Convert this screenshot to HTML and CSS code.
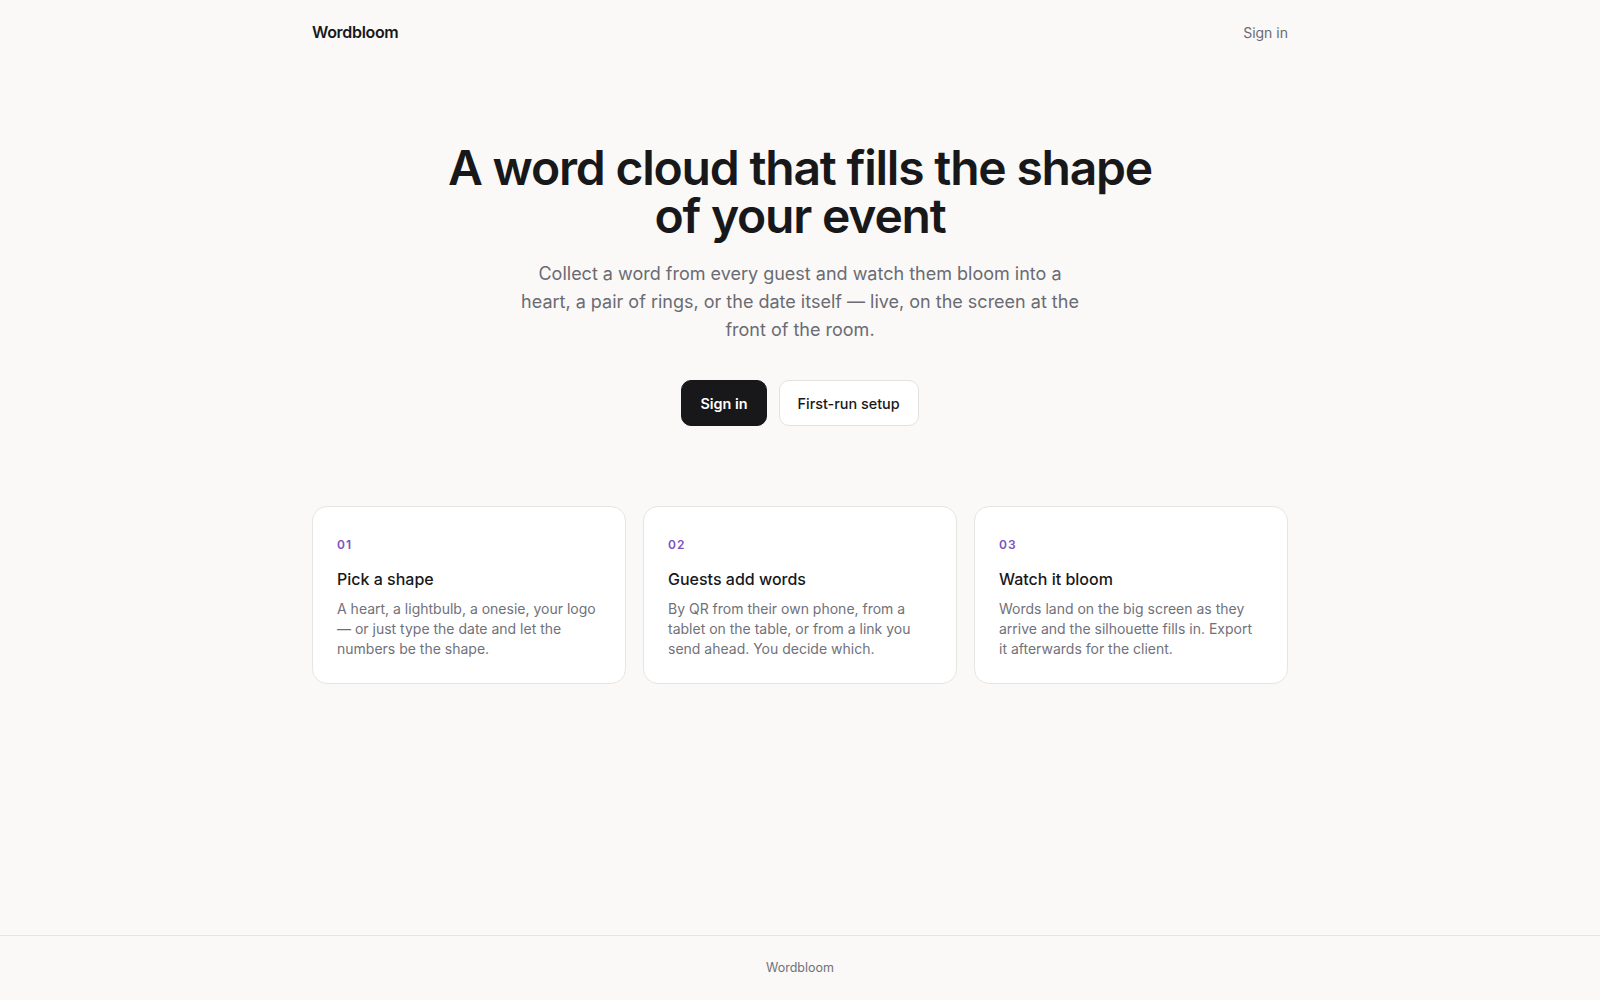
FILE: index.html
```html
<!DOCTYPE html>
<html lang="en">
<head>
<meta charset="utf-8">
<title>Wordbloom</title>
<link rel="stylesheet" href="styles.css">
</head>
<body>
  <header class="site-header">
    <div class="container header-row">
      <a class="brand" href="#">Wordbloom</a>
      <a class="nav-link" href="#">Sign in</a>
    </div>
  </header>
  <main class="main">
    <section class="hero container">
      <h1 class="hero-title">A word cloud that fills the shape<br>of your event</h1>
      <p class="hero-sub">Collect a word from every guest and watch them bloom into a heart, a pair of rings, or the date itself — live, on the screen at the front of the room.</p>
      <div class="hero-actions">
        <a class="btn btn-primary" href="#">Sign in</a>
        <a class="btn btn-secondary" href="#">First-run setup</a>
      </div>
    </section>
    <section class="steps container">
      <div class="card">
        <div class="card-num">01</div>
        <h3 class="card-title">Pick a shape</h3>
        <p class="card-text">A heart, a lightbulb, a onesie, your logo — or just type the date and let the numbers be the shape.</p>
      </div>
      <div class="card">
        <div class="card-num">02</div>
        <h3 class="card-title">Guests add words</h3>
        <p class="card-text">By QR from their own phone, from a tablet on the table, or from a link you send ahead. You decide which.</p>
      </div>
      <div class="card">
        <div class="card-num">03</div>
        <h3 class="card-title">Watch it bloom</h3>
        <p class="card-text">Words land on the big screen as they arrive and the silhouette fills in. Export it afterwards for the client.</p>
      </div>
    </section>
  </main>
  <footer class="site-footer">Wordbloom</footer>
</body>
</html>
```
FILE: styles.css
```css
* { box-sizing: border-box; }
html, body { margin: 0; padding: 0; }
body {
  font-family: Inter, "Noto Sans", "Liberation Sans", sans-serif;
  background: #faf9f7;
  color: #18181b;
  min-height: 100vh;
  display: flex;
  flex-direction: column;
  -webkit-font-smoothing: antialiased;
}
a { text-decoration: none; color: inherit; }
.container {
  width: 976px;
  margin: 0 auto;
}
.site-header { height: 64px; }
.header-row {
  height: 64px;
  display: flex;
  align-items: center;
  justify-content: space-between;
}
.brand {
  font-size: 16px;
  font-weight: 600;
  letter-spacing: -0.02em;
  color: #18181b;
}
.nav-link {
  font-size: 14px;
  color: #6b6b73;
}
.main { flex: 1; }
.hero {
  padding-top: 80px;
  display: flex;
  flex-direction: column;
  align-items: center;
  text-align: center;
}
.hero-title {
  margin: 0;
  font-size: 48px;
  line-height: 48px;
  font-weight: 600;
  letter-spacing: -0.025em;
  color: #18181b;
}
.hero-sub {
  margin: 20px 0 0;
  max-width: 560px;
  font-size: 18px;
  line-height: 28px;
  color: #6b6b73;
}
.hero-actions {
  margin-top: 36px;
  display: flex;
  gap: 12px;
}
.btn {
  height: 46px;
  display: inline-flex;
  align-items: center;
  padding: 0 18px;
  border-radius: 10px;
  font-size: 14.4px;
}
.btn-primary {
  background: #18181b;
  color: #fff;
  font-weight: 600;
  border: 1px solid #18181b;
}
.btn-secondary {
  background: #fff;
  color: #18181b;
  font-weight: 500;
  border: 1px solid #e4e2df;
}
.steps {
  margin-top: 80px;
  display: grid;
  grid-template-columns: repeat(3, 1fr);
  gap: 17px;
}
.card {
  background: #fff;
  border: 1px solid #e7e5e2;
  border-radius: 15px;
  padding: 29px 24px 24px;
}
.card-num {
  font-size: 12px;
  line-height: 18px;
  font-weight: 600;
  letter-spacing: 0.1em;
  color: #7c52c0;
}
.card-title {
  margin: 12px 0 7px;
  font-size: 16px;
  line-height: 26px;
  font-weight: 500;
  color: #18181b;
}
.card-text {
  margin: 0;
  font-size: 14px;
  line-height: 20px;
  color: #71717a;
}
.site-footer {
  border-top: 1px solid #e6e4e1;
  padding: 23px 0 23px;
  line-height: 18px;
  font-size: 12.5px;
  color: #71717a;
  text-align: center;
}
```
